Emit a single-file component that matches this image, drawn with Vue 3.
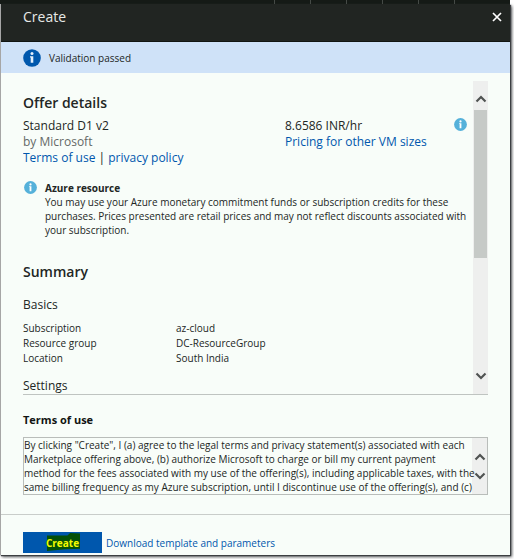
<script setup>
import { ref } from 'vue'

const summary = [
  { label: 'Subscription', value: 'az-cloud' },
  { label: 'Resource group', value: 'DC-ResourceGroup' },
  { label: 'Location', value: 'South India' },
]

const terms = ref(`By clicking "Create", I (a) agree to the legal terms and privacy statement(s) associated with each
Marketplace offering above, (b) authorize Microsoft to charge or bill my current payment
method for the fees associated with my use of the offering(s), including applicable taxes, with the
same billing frequency as my Azure subscription, until I discontinue use of the offering(s), and (c)`)
</script>

<template>
  <div class="page">
    <div class="topbar">
      <i v-for="n in 6" :key="n"></i>
    </div>

    <main class="blade">
      <header class="blade-header">
        <h1>Create</h1>
        <button class="close" type="button" aria-label="Close">
          <svg viewBox="0 0 10 10" width="10" height="10">
            <path d="M1 1l8 8M9 1l-8 8" fill="none" stroke="#fff" stroke-width="1.7" />
          </svg>
        </button>
      </header>

      <div class="status" role="status">
        <svg viewBox="0 0 18 18" width="18" height="18">
          <circle cx="9" cy="9" r="8.8" fill="#0058ad" />
          <circle cx="9" cy="4.6" r="1.5" fill="#e4f0fc" />
          <path d="M7 7.2h3.3v6.6H7.7V8.4H7z" fill="#e4f0fc" />
        </svg>
        <span>Validation passed</span>
      </div>

      <section class="details">
        <div class="content">
          <h2>Offer details</h2>
          <div class="offer">
            <div class="plan">
              <div>Standard D1 v2</div>
              <div class="muted">by Microsoft</div>
              <div><a href="#">Terms of use</a> | <a href="#">privacy policy</a></div>
            </div>
            <div class="price">
              <div>8.6586 INR/hr</div>
              <div><a href="#">Pricing for other VM sizes</a></div>
            </div>
            <svg class="info" viewBox="0 0 13 13" width="13" height="13">
              <circle cx="6.5" cy="6.5" r="6.4" fill="#55b1da" />
              <circle cx="6.5" cy="3.4" r="1.1" fill="#fff" />
              <path d="M5.1 5.2h2.3v5H5.6V6H5.1z" fill="#fff" />
            </svg>
          </div>

          <div class="notice">
            <svg class="info" viewBox="0 0 13 13" width="13" height="13">
              <circle cx="6.5" cy="6.5" r="6.4" fill="#55b1da" />
              <circle cx="6.5" cy="3.4" r="1.1" fill="#fff" />
              <path d="M5.1 5.2h2.3v5H5.6V6H5.1z" fill="#fff" />
            </svg>
            <div>
              <strong>Azure resource</strong>
              <p>You may use your Azure monetary commitment funds or subscription credits for these purchases. Prices presented are retail prices and may not reflect discounts associated with your subscription.</p>
            </div>
          </div>

          <h2>Summary</h2>
          <h3>Basics</h3>
          <dl>
            <template v-for="row in summary" :key="row.label">
              <dt>{{ row.label }}</dt>
              <dd>{{ row.value }}</dd>
            </template>
          </dl>
          <h3>Settings</h3>
        </div>

        <div class="scrollbar">
          <button type="button" aria-label="Scroll up">
            <svg viewBox="0 0 12 8" width="12" height="8">
              <path d="M1.5 6.5L6 2l4.5 4.5" fill="none" stroke="#505352" stroke-width="2.2" />
            </svg>
          </button>
          <div class="track"><div class="thumb"></div></div>
          <button class="down" type="button" aria-label="Scroll down">
            <svg viewBox="0 0 12 8" width="12" height="8">
              <path d="M1.5 1.5L6 6l4.5-4.5" fill="none" stroke="#505352" stroke-width="2.2" />
            </svg>
          </button>
        </div>
      </section>

      <section class="terms">
        <label for="terms">Terms of use</label>
        <div class="terms-box">
          <textarea id="terms" v-model="terms" rows="4" readonly></textarea>
          <div class="spinner">
            <button type="button" aria-label="Previous terms">
              <svg viewBox="0 0 12 8" width="12" height="8">
                <path d="M1.5 6.5L6 2l4.5 4.5" fill="none" stroke="#505352" stroke-width="2.2" />
              </svg>
            </button>
            <button type="button" aria-label="More terms">
              <svg viewBox="0 0 12 8" width="12" height="8">
                <path d="M1.5 1.5L6 6l4.5-4.5" fill="none" stroke="#505352" stroke-width="2.2" />
              </svg>
            </button>
          </div>
        </div>
      </section>

      <footer>
        <button class="create" type="button"><span>Create</span></button>
        <a href="#">Download template and parameters</a>
      </footer>
    </main>
  </div>
</template>

<style>
body {
  margin: 0;
  background: #fff;
}
</style>

<style scoped>
* {
  box-sizing: border-box;
}

.page {
  height: 100vh;
  min-height: 480px;
  padding: 0 4px 4px 0;
  display: flex;
  flex-direction: column;
  overflow: hidden;
  font-family: "Open Sans", "Noto Sans", sans-serif;
  font-size: 10px;
  line-height: 14px;
  color: #222624;
}

h1, h2, h3, p, dl, dd {
  margin: 0;
}

a {
  color: #0057ad;
  text-decoration: none;
}

button {
  font-family: inherit;
  border: none;
  padding: 0;
  cursor: pointer;
}

svg {
  display: block;
  flex: none;
}

.topbar {
  height: 4px;
  flex: none;
  display: flex;
  justify-content: flex-end;
  gap: 35px;
  padding-right: 55px;
  background: #151a16;
}

.topbar i {
  width: 1px;
  background: #454a46;
}

.blade {
  flex: 1;
  min-height: 0;
  display: flex;
  flex-direction: column;
  background: #f8fdf9;
  border-left: 1px solid #a6a6a6;
  box-shadow: 1px 1px 1px #3c3f42, 2px 2px 3px #55585a;
}

.blade-header {
  height: 38px;
  flex: none;
  display: flex;
  justify-content: space-between;
  padding: 4px 8px 0 22px;
  background: #212522;
  border-bottom: 1px solid #111512;
}

.blade-header h1 {
  font-size: 14px;
  line-height: 18px;
  font-weight: 400;
  color: #e6e9e7;
}

.close {
  height: 18px;
  background: none;
}

.status {
  height: 31px;
  flex: none;
  display: flex;
  align-items: center;
  gap: 8px;
  padding-left: 22px;
  background: #cfe2f8;
}

.details {
  flex: 1;
  min-height: 0;
  display: flex;
  margin: 8px 22px 0;
  border-bottom: 1px solid #bfc4c1;
}

.content {
  flex: 1;
  overflow: hidden;
  padding: 12px 6px 0 0;
}

h2 {
  font-size: 14px;
  line-height: 20px;
  font-weight: 600;
}

.offer {
  display: flex;
  padding-top: 5px;
  font-size: 12px;
  line-height: 16px;
}

.plan {
  flex: 262 0 0;
}

.price {
  flex: 169 0 0;
}

.muted {
  color: #656967;
}

.notice {
  display: flex;
  gap: 8px;
  padding: 15px 0 25px 1px;
}

.notice strong {
  display: block;
}

h3 {
  font-size: 12px;
  line-height: 16px;
  font-weight: 400;
}

h2 + h3 {
  margin-top: 15px;
}

dl {
  display: grid;
  grid-template-columns: 153px 1fr;
  line-height: 15px;
  padding: 8px 0 12px;
}

.scrollbar {
  width: 15px;
  display: flex;
  flex-direction: column;
  background: #eeefee;
}

.scrollbar button {
  height: 29px;
  display: flex;
  align-items: flex-end;
  justify-content: center;
  padding-bottom: 7px;
  background: none;
}

.scrollbar .down {
  padding-bottom: 14px;
}

.track {
  flex: 1;
  padding: 0 1px;
}

.thumb {
  height: 58%;
  background: #c6cac7;
}

.terms {
  padding: 16px 22px 19px;
}

.terms label {
  display: block;
  margin-bottom: 8px;
  font-size: 11px;
  line-height: 18px;
  font-weight: 700;
  color: #111412;
}

.terms-box {
  display: flex;
  border: 1px solid #b9bdba;
}

/* the text may run a little under the edge of the arrows */
.terms-box textarea {
  position: relative;
  z-index: 1;
  flex: 1;
  min-width: 0;
  display: block;
  margin: 0 -4px 0 0;
  padding: 0;
  border: none;
  outline: none;
  resize: none;
  overflow: hidden;
  background: none;
  font: inherit;
  color: inherit;
}

.spinner {
  width: 15px;
  display: flex;
  flex-direction: column;
  align-items: center;
  justify-content: center;
  gap: 11px;
  background: #eeefee;
}

.spinner button {
  background: none;
}

footer {
  display: flex;
  align-items: center;
  gap: 4px;
  padding: 17px 22px 2px;
  border-top: 1px solid #c9cdca;
}

.create {
  position: relative;
  width: 79px;
  height: 21px;
  background: #0057ad;
  color: #f4fb00;
  font-size: 10px;
  font-weight: 700;
}

/* marker stroke behind the label */
.create::before {
  content: "";
  position: absolute;
  inset: 1px 22px 2px 24px;
  background: #045008;
  clip-path: polygon(0 14%, 62% 14%, 70% 0, 100% 3%, 100% 88%, 55% 90%, 0 100%);
}

.create span {
  position: relative;
}
</style>
